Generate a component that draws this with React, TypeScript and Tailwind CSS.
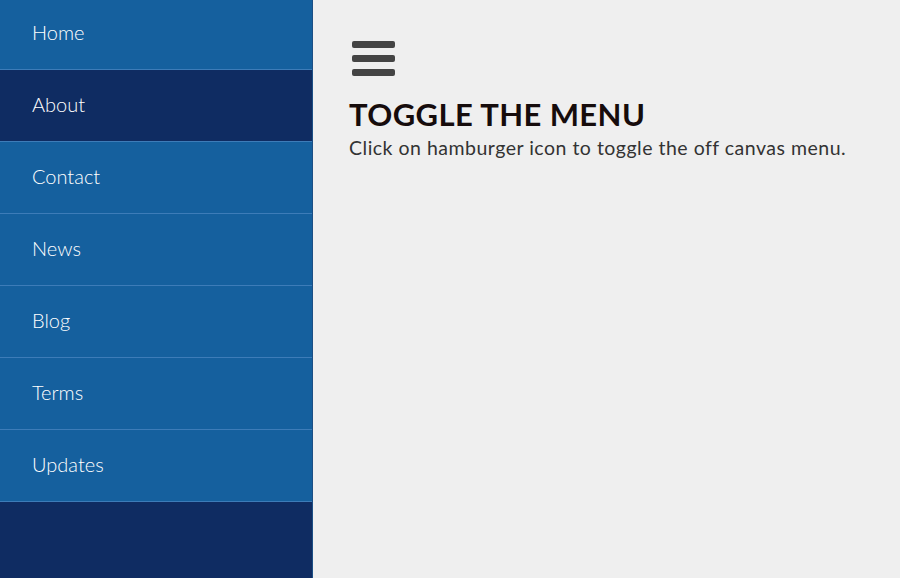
import React from 'react';

const links = ['Home', 'About', 'Contact', 'News', 'Blog', 'Terms', 'Updates'];

const App: React.FC = () => {
  const active = 'About';

  return (
    <div className="flex h-[578px] w-[900px] overflow-hidden bg-[#efefef] font-['Lato','Open_Sans',sans-serif]">
      <nav className="flex w-[313px] shrink-0 flex-col border-r border-r-[#1c4f85] bg-[#0f2c62]">
        {links.map((link, i) => (
          <a
            key={link}
            href="#"
            className={`flex items-center border-b border-b-[#3d7cb8] pl-8 text-[20px] font-light text-white ${
              i === 0 ? 'h-[70px] pb-[5px]' : 'h-[72px] pb-[4px]'
            } ${link === active ? 'bg-[#0f2c62]' : 'bg-[#15609e]'}`}
          >
            {link}
          </a>
        ))}
      </nav>

      <main className="flex-1 pl-9 pt-[41px]">
        <button className="ml-[3px] flex flex-col gap-[7px]" aria-label="Toggle menu">
          <span className="block h-[7px] w-[43px] rounded-[2px] bg-[#444]" />
          <span className="block h-[7px] w-[43px] rounded-[2px] bg-[#444]" />
          <span className="block h-[7px] w-[43px] rounded-[2px] bg-[#444]" />
        </button>
        <h1 className="mt-[20px] text-[31px] font-bold leading-[36px] tracking-[0.4px] text-[#160c0c]">
          TOGGLE THE MENU
        </h1>
        <p className="mt-[3px] text-[19.5px] leading-[26px] tracking-[0.5px] text-[#333]">
          Click on hamburger icon to toggle the off canvas menu.
        </p>
      </main>
    </div>
  );
};

export default App;
